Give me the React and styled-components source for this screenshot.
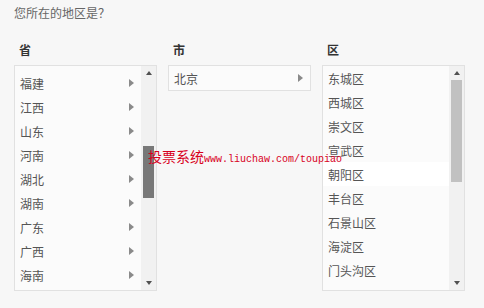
import React, { useLayoutEffect, useRef } from 'react';
import styled, { createGlobalStyle } from 'styled-components';

const GlobalStyle = createGlobalStyle`
  body {
    margin: 0;
    background: #f7f7f7;
    font-family: "Noto Sans CJK SC", "Noto Sans", sans-serif;
  }
`;

const ROW = 24;
const LIST_H = 224;
const BTN = 14;

const provinces = [
  '北京', '天津', '河北', '山西', '内蒙古', '辽宁', '吉林', '黑龙江', '上海',
  '江苏', '浙江', '安徽', '福建', '江西', '山东', '河南', '湖北', '湖南',
  '广东', '广西', '海南', '重庆', '四川', '贵州', '云南', '西藏', '陕西',
  '甘肃', '青海', '宁夏', '新疆', '香港', '澳门', '台湾', '海外'
];
const cities = ['北京'];
const districts = [
  '东城区', '西城区', '崇文区', '宣武区', '朝阳区', '丰台区', '石景山区',
  '海淀区', '门头沟区', '房山区', '通州区', '顺义区', '昌平区', '大兴区',
  '怀柔区', '平谷区', '密云县', '延庆县'
];

const Page = styled.div`
  position: relative;
  padding: 5px 0 0 14px;
  height: 303px;
`;

const Title = styled.div`
  font-size: 12px;
  line-height: 16px;
  color: #666;
`;

const Columns = styled.div`
  display: grid;
  grid-template-columns: 143px 143px 143px;
  column-gap: 11px;
  align-items: start;
  margin-top: 21px;
`;

const Column = styled.div`
  display: flex;
  flex-direction: column;
`;

const Header = styled.div`
  font-size: 12px;
  line-height: 16px;
  font-weight: bold;
  color: #333;
  padding-left: 5px;
  margin-bottom: 7px;
`;

const Box = styled.div`
  display: flex;
  border: 1px solid #e1e1e1;
  background: #fbfbfb;
  ${p => p.tall && `height: ${LIST_H}px;`}
`;

const List = styled.div`
  flex: 1;
  overflow: hidden;
  ${p => p.tall && `height: ${LIST_H - 5}px; margin-bottom: 5px;`}
`;

const Item = styled.div`
  height: ${ROW}px;
  display: flex;
  align-items: center;
  justify-content: space-between;
  padding: 0 7px 0 5px;
  font-size: 12px;
  color: #555;
  background: ${p => (p.active ? '#ffffff' : 'transparent')};
`;

const Arrow = styled.span`
  width: 0;
  height: 0;
  border-left: 5px solid #8a8a8a;
  border-top: 4px solid transparent;
  border-bottom: 4px solid transparent;
`;

const Bar = styled.div`
  width: 15px;
  display: flex;
  flex-direction: column;
  background: #f1f1f1;
`;

const BarButton = styled.div`
  height: ${BTN}px;
  display: flex;
  align-items: center;
  justify-content: center;
  &::after {
    content: '';
    width: 0;
    height: 0;
    border-left: 3px solid transparent;
    border-right: 3px solid transparent;
    ${p => (p.down ? 'border-top' : 'border-bottom')}: 4px solid #505050;
  }
`;

const Track = styled.div`
  flex: 1;
  display: flex;
  flex-direction: column;
`;

const Thumb = styled.div`
  margin: 0 2px;
  background: ${p => (p.dark ? '#787878' : '#c1c1c1')};
`;

const Watermark = styled.div`
  position: absolute;
  left: 148px;
  top: 147px;
  color: #d8001c;
  white-space: nowrap;
  font-size: 14px;
  line-height: 18px;
  pointer-events: none;
  span {
    font-family: "Liberation Mono", monospace;
    font-size: 10px;
  }
`;

function ScrollBar({ count, scroll, dark }) {
  const track = LIST_H - BTN * 2;
  const content = count * ROW;
  const h = Math.round((track * LIST_H) / content);
  const top = Math.round((track * scroll) / content);
  return (
    <Bar>
      <BarButton />
      <Track>
        <Thumb dark={dark} style={{ marginTop: top, height: h }} />
      </Track>
      <BarButton down />
    </Bar>
  );
}

function Picker({ items, scroll = 0, arrows, active, dark }) {
  const ref = useRef(null);
  useLayoutEffect(() => {
    if (ref.current) ref.current.scrollTop = scroll;
  }, [scroll]);
  return (
    <Box tall>
      <List tall ref={ref}>
        {items.map(name => (
          <Item key={name} active={name === active}>
            {name}
            {arrows && <Arrow />}
          </Item>
        ))}
      </List>
      <ScrollBar count={items.length} scroll={scroll} dark={dark} />
    </Box>
  );
}

export default function App() {
  return (
    <Page>
      <GlobalStyle />
      <Title>您所在的地区是？</Title>
      <Columns>
        <Column>
          <Header>省</Header>
          <Picker items={provinces} scroll={283} arrows dark />
        </Column>
        <Column>
          <Header>市</Header>
          <Box>
            <List>
              {cities.map(name => (
                <Item key={name}>
                  {name}
                  <Arrow />
                </Item>
              ))}
            </List>
          </Box>
        </Column>
        <Column>
          <Header>区</Header>
          <Picker items={districts} active="朝阳区" />
        </Column>
      </Columns>
      <Watermark>
        投票系统<span>www.liuchaw.com/toupiao</span>
      </Watermark>
    </Page>
  );
}
